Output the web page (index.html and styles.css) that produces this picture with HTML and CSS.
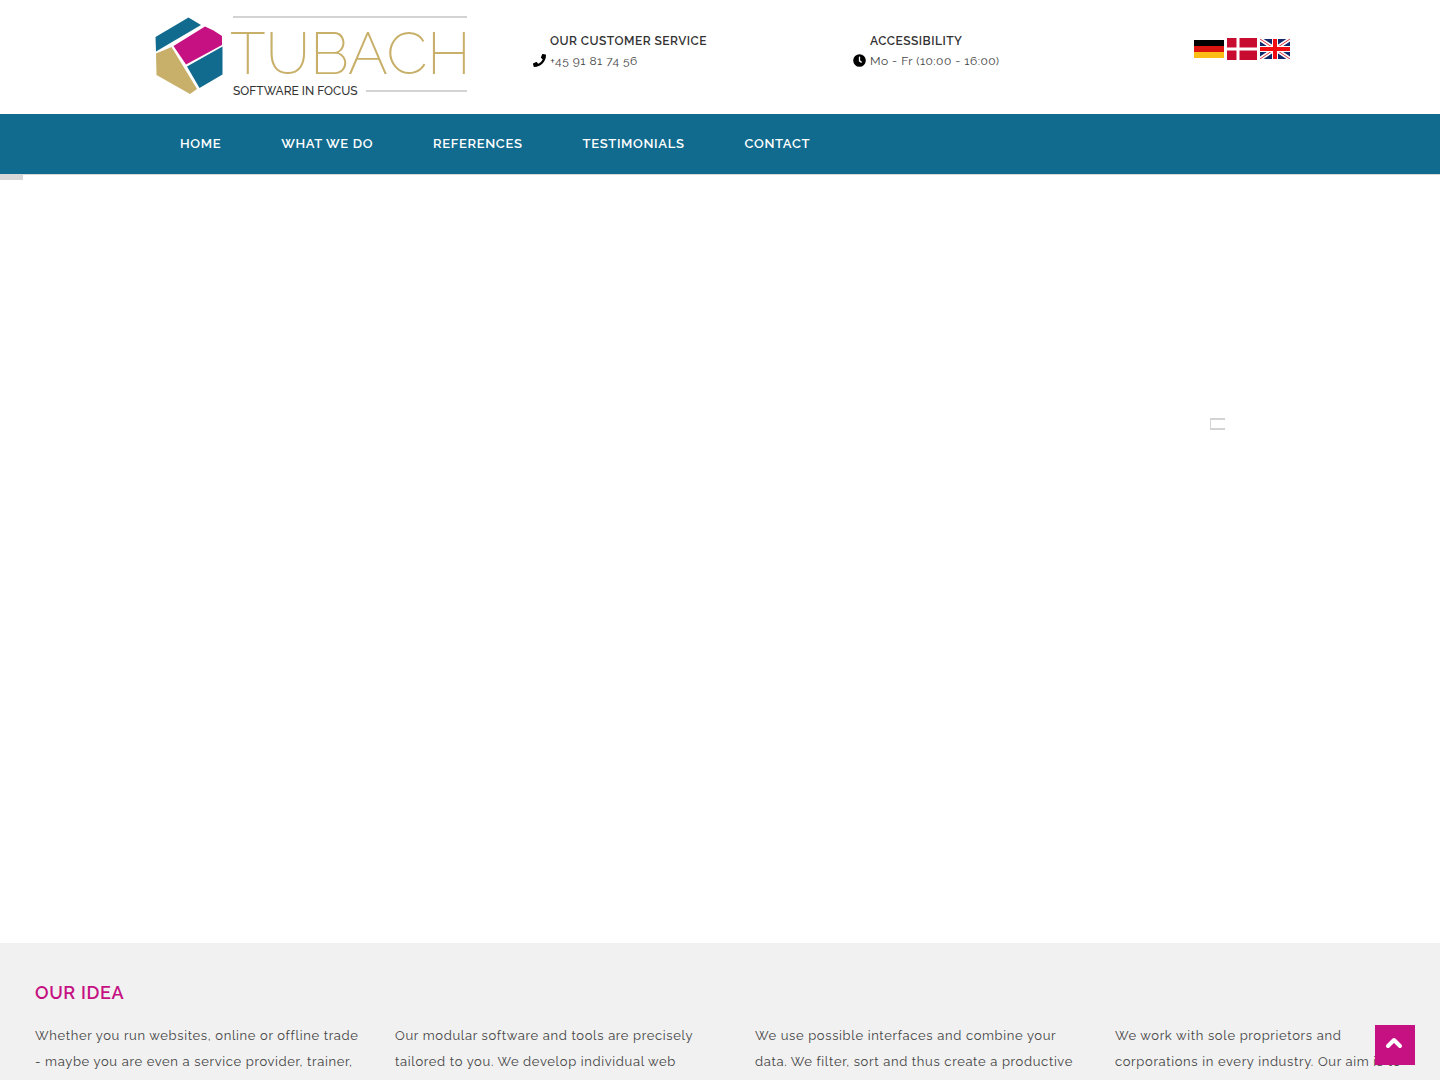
FILE: index.html
```html
<!DOCTYPE html>
<html lang="en">
<head>
    <meta charset="UTF-8">
    <meta name="viewport" content="width=device-width, initial-scale=1.0">
    <title>Tubach - Software in Focus</title>
    <link rel="stylesheet" href="styles.css">
</head>
<body>
    <header class="header">
        <div class="container header-row">
            <a class="logo" href="#">
                <svg class="logo-image" width="312" height="80" viewBox="0 0 312 80" role="img" aria-label="Tubach - Software in Focus">
                    <path fill="#116b8e" d="M0.500 21L33.500 1.500L46 9L1 35.500z"/>
                    <path fill="#c51182" d="M18.500 30L50 10.500L58.500 14.500L67 20V29L31 48.500z"/>
                    <path fill="#c8b06a" d="M1 37.500L16.500 31L42 73L35 78L1.500 59z"/>
                    <path fill="#116b8e" d="M32 50.500L67.500 30.500V58.500L44.500 72z"/>
                    <path stroke="#d3d3d3" stroke-width="2" d="M78 1H312M211 75H312"/>
                    <text class="logo-name" x="75" y="58">TUBACH</text>
                    <text class="logo-claim" x="78" y="79">SOFTWARE IN FOCUS</text>
                </svg>
            </a>
            <div class="info">
                <strong class="info-title">OUR CUSTOMER SERVICE</strong>
                <div class="info-text">
                    <svg class="info-icon" viewBox="0 0 512 512" aria-hidden="true"><path d="M493.400 24.600l-104-24c-11.300-2.600-22.900 3.300-27.500 13.900l-48 112c-4.200 9.800-1.400 21.300 6.900 28l60.600 49.600c-36 76.700-98.900 140.500-177.200 177.200l-49.600-60.600c-6.800-8.300-18.200-11.100-28-6.900l-112 48C3.900 366.500-2 378.100.6 389.400l24 104C27.100 504.200 36.700 512 48 512c256.100 0 464-207.500 464-464 0-11.200-7.700-20.900-18.600-23.400z"/></svg>
                    <span>+45 91 81 74 56</span>
                </div>
            </div>
            <div class="info">
                <strong class="info-title">ACCESSIBILITY</strong>
                <div class="info-text">
                    <svg class="info-icon" viewBox="0 0 512 512" aria-hidden="true"><circle cx="256" cy="256" r="248"/><path fill="none" stroke="#fff" stroke-width="52" stroke-linecap="round" d="M256 120V268L325 320"/></svg>
                    <span>Mo - Fr (10:00 - 16:00)</span>
                </div>
            </div>
            <div class="languages">
                <a href="#" aria-label="Deutsch">
                    <svg width="30" height="18" viewBox="0 0 30 18"><path d="M0 0H30V6H0z"/><path fill="#dd1510" d="M0 6H30V12H0z"/><path fill="#fcbd16" d="M0 12H30V18H0z"/></svg>
                </a>
                <a href="#" aria-label="Dansk">
                    <svg width="30" height="22" viewBox="0 0 30 22"><path fill="#c80c30" d="M0 0H30V22H0z"/><path stroke="#fff" stroke-width="3" d="M11 0V22M0 11H30"/></svg>
                </a>
                <a href="#" aria-label="English">
                    <svg width="30" height="20" viewBox="0 0 30 20"><path fill="#12296b" d="M0 0H30V20H0z"/><path stroke="#fff" stroke-width="4" d="M0 0L30 20M30 0L0 20"/><path stroke="#e0393f" stroke-width="1" d="M0 0L30 20M30 0L0 20"/><path stroke="#fff" stroke-width="6" d="M15 0V20M0 10H30"/><path stroke="#f00c10" stroke-width="4" d="M15 0V20M0 10H30"/></svg>
                </a>
            </div>
        </div>
    </header>

    <nav class="navbar">
        <div class="container nav-row">
            <a class="nav-link" href="#">HOME</a>
            <a class="nav-link" href="#">WHAT WE DO</a>
            <a class="nav-link" href="#">REFERENCES</a>
            <a class="nav-link" href="#">TESTIMONIALS</a>
            <a class="nav-link" href="#">CONTACT</a>
        </div>
    </nav>

    <main>
        <section class="slider">
            <div class="slider-progress"></div>
            <div class="slider-thumb"></div>
        </section>

        <section class="idea">
            <h2 class="idea-title">OUR IDEA</h2>
            <div class="idea-columns">
                <p>Whether you run websites, online or offline trade<br>- maybe you are even a service provider, trainer,</p>
                <p>Our modular software and tools are precisely<br>tailored to you. We develop individual web</p>
                <p>We use possible interfaces and combine your<br>data. We filter, sort and thus create a productive</p>
                <p>We work with sole proprietors and<br>corporations in every industry. Our aim is to</p>
            </div>
        </section>
    </main>

    <button class="to-top" type="button" aria-label="Back to top">
        <svg width="18" height="12" viewBox="0 0 18 12"><path fill="none" stroke="#fff" stroke-width="4" stroke-linecap="round" stroke-linejoin="round" d="M3 9L9 3L15 9"/></svg>
    </button>
</body>
</html>
```

FILE: styles.css
```css
* {
    box-sizing: border-box;
}
body {
    margin: 0;
    background-color: #fff;
    color: #444;
    font-family: Raleway, Lato, sans-serif;
    font-size: 13px;
    line-height: 26px;
    letter-spacing: 0.05em;
}
a {
    text-decoration: none;
}
svg {
    display: block;
}
.container {
    max-width: 1170px;
    margin: 0 auto;
    padding: 0 15px;
}
.header-row {
    display: grid;
    grid-template-columns: 383px 320px 1fr auto;
    padding-top: 16px;
    padding-bottom: 18px;
}
.logo {
    padding-left: 5px;
}
.logo-image {
    overflow: visible;
}
.logo-name {
    fill: #c8b06a;
    font-size: 59px;
    font-weight: 200;
    letter-spacing: 0;
}
.logo-claim {
    fill: #333;
    font-size: 12px;
    font-weight: 500;
    letter-spacing: 0;
}
.info {
    padding-top: 15px;
    font-size: 12px;
    line-height: 20px;
    letter-spacing: 0.04em;
}
.info-title {
    display: block;
    padding-left: 17px;
    color: #333;
    font-weight: 600;
}
.info-text {
    display: flex;
    gap: 4px;
}
.info-icon {
    width: 13px;
    height: 13px;
    margin-top: 3px;
    fill: #000;
}
.languages {
    display: flex;
    align-items: center;
    gap: 3px;
    height: 66px;
}
.navbar {
    background-color: #116b8e;
    border-bottom: 1px solid #d8d8d8;
}
.nav-row {
    display: flex;
    gap: 60px;
    padding: 0 45px;
}
.nav-link {
    color: #fff;
    font-weight: 600;
    line-height: 60px;
}
.slider {
    position: relative;
    height: 768px;
}
.slider-progress {
    width: 23px;
    height: 5px;
    background-color: #d8d8d8;
}
.slider-thumb {
    position: absolute;
    top: 243px;
    right: 215px;
    width: 15px;
    height: 12px;
    border: 2px solid #d3d3d3;
    border-width: 2px 0 2px 1px;
}
.idea {
    padding: 37px 0 40px;
    background-color: #f1f1f1;
}
.idea-title {
    margin: 0 0 17px;
    padding-left: 35px;
    color: #c51182;
    font-size: 18px;
    font-weight: 600;
    line-height: 26px;
}
.idea-columns {
    display: grid;
    grid-template-columns: repeat(4, 1fr);
}
.idea-columns p {
    margin: 0;
    padding-left: 35px;
}
.to-top {
    position: fixed;
    right: 25px;
    bottom: 15px;
    display: flex;
    justify-content: center;
    align-items: flex-start;
    width: 40px;
    height: 40px;
    padding: 12px 2px 0 0;
    border: 0;
    background-color: #c51182;
    cursor: pointer;
}
```
